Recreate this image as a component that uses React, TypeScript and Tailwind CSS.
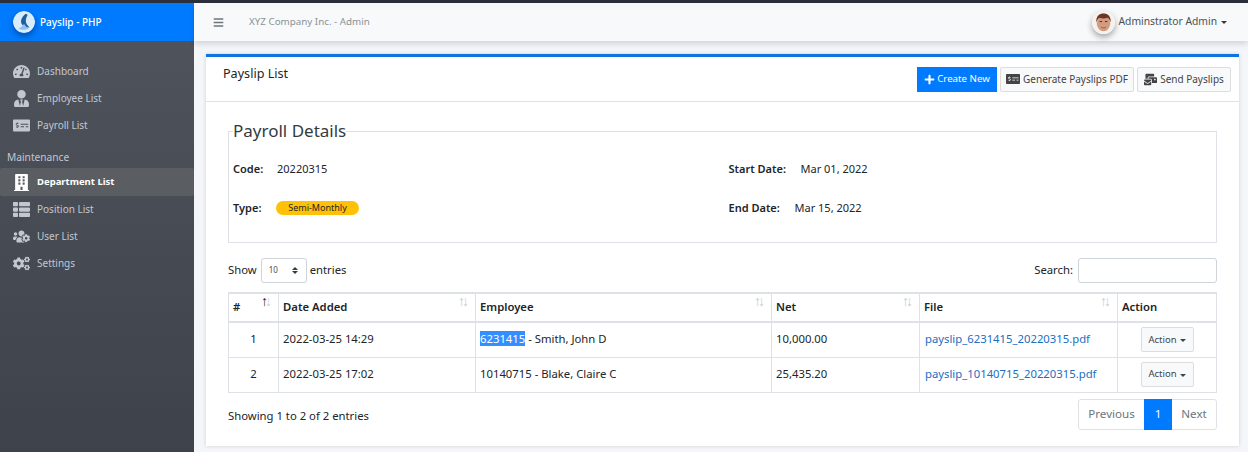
import { FaBars, FaBuilding, FaCogs, FaMailBulk, FaMoneyCheckAlt, FaPlus, FaTachometerAlt, FaThList, FaUserTie, FaUsersCog } from 'react-icons/fa';
import type { IconType } from 'react-icons';

const font = "font-['Noto_Sans',sans-serif]";

const mainNav: { label: string; icon: IconType }[] = [
  { label: 'Dashboard', icon: FaTachometerAlt },
  { label: 'Employee List', icon: FaUserTie },
  { label: 'Payroll List', icon: FaMoneyCheckAlt },
];

const maintenanceNav: { label: string; icon: IconType; active?: boolean }[] = [
  { label: 'Department List', icon: FaBuilding, active: true },
  { label: 'Position List', icon: FaThList },
  { label: 'User List', icon: FaUsersCog },
  { label: 'Settings', icon: FaCogs },
];

function NavItem({ label, icon: Icon, active }: { label: string; icon: IconType; active?: boolean }) {
  return (
    <div
      className={`flex items-center rounded-[2px] pl-[9px] ${
        active ? 'h-[28px] bg-[#5a5e62] text-[9.500px] font-bold text-white' : 'h-[27px] text-[10px] text-[#c2c7d0]'
      }`}
    >
      <span className="flex w-[24px] justify-center text-[17px]">
        <Icon />
      </span>
      <span className="ml-[4px]">{label}</span>
    </div>
  );
}

function Logo() {
  return (
    <svg viewBox="0 0 24 24" className="h-[22px] w-[22px] rounded-full shadow-[0_3px_6px_rgba(0,0,0,0.35)]">
      <circle cx="12" cy="12" r="12" fill="#d9ecfb" />
      <path d="M14 3c-3 2-6 6-5 10 1 3 5 5 9 5-2-2-4-4-4-7 0-3 1-5 2-7z" fill="#1f5f9e" />
      <path d="M6 19c3-1 5-3 6-5 1 2 3 4 5 5-3 2-8 2-11 0z" fill="#8fc1ea" />
    </svg>
  );
}

function Avatar() {
  return (
    <svg viewBox="0 0 24 24" className="h-[23px] w-[23px] rounded-full shadow-[0_3px_6px_rgba(0,0,0,0.35)]">
      <circle cx="12" cy="12" r="12" fill="#f4f1ee" />
      <ellipse cx="12" cy="13" rx="7" ry="8" fill="#d29b7e" />
      <path d="M4.5 12C4 5 8 2.5 12 2.500s8 2.500 7.500 9.500c-1-3-2-4.500-3.500-5-3 1-6 1-8 0-1.500.5-2.500 2-3.500 5z" fill="#6b3423" />
      <path d="M8 11h2.500M13.500 11H16" stroke="#4a2a1c" strokeWidth="1" />
      <path d="M9.500 17c1.500.8 3.500.8 5 0" stroke="#8a4f3a" strokeWidth="0.800" fill="none" />
    </svg>
  );
}

function Sort({ active }: { active?: boolean }) {
  return (
    <span className="absolute right-[6px] top-[-1px] flex text-[14px] leading-[16px]">
      <span className={active ? 'text-[#212529]' : 'text-[#c8cbce]'}>↑</span>
      <span className="ml-[-3px] text-[#c8cbce]">↓</span>
    </span>
  );
}

function ActionButton() {
  return (
    <div className="mx-auto flex h-[25px] w-[53px] items-center justify-center gap-[3px] rounded-[2px] border border-[#dddddd] bg-[#f8f9fa] text-[9.500px] text-[#444444]">
      Action
      <span className="mt-[1px] border-x-[3px] border-t-[3px] border-x-transparent border-t-[#444444]" />
    </div>
  );
}

const rows = [
  { n: 1, date: '2022-03-25 14:29', id: '6231415', name: ' - Smith, John D', net: '10,000.00', file: 'payslip_6231415_20220315.pdf', picked: true },
  { n: 2, date: '2022-03-25 17:02', id: '10140715', name: ' - Blake, Claire C', net: '25,435.20', file: 'payslip_10140715_20220315.pdf', picked: false },
];

export default function App() {
  return (
    <div className={`${font} flex h-[452px] w-[1248px] flex-col overflow-hidden bg-[#f4f6f9] text-[#212529]`}>
      <div className="h-[3px] shrink-0 bg-[#2c2f3c]" />
      <div className="flex min-h-0 flex-1">
        {/* Sidebar */}
        <aside className="w-[194px] shrink-0 bg-gradient-to-b from-[#50545d] to-[#3d424b]">
          <div className="flex h-[38px] items-center gap-[5px] bg-[#007bff] pl-[13px] text-[10px] font-medium text-white">
            <Logo />
            Payslip - PHP
          </div>
          <nav className="pt-[17px]">
            {mainNav.map(item => (
              <NavItem key={item.label} {...item} />
            ))}
            <div className="flex h-[29px] items-end pb-[3px] pl-[7px] text-[10.200px] text-[#c2c7d0]">Maintenance</div>
            {maintenanceNav.map(item => (
              <NavItem key={item.label} {...item} />
            ))}
          </nav>
        </aside>

        <div className="flex min-w-0 flex-1 flex-col">
          {/* Top bar */}
          <header className="z-10 flex h-[38px] shrink-0 items-center bg-[#f8f9fa] pl-[19px] pr-[21px] shadow-[0_3px_6px_rgba(0,0,0,0.14)]">
            <FaBars className="text-[11px] text-[#6c757d]" />
            <span className="ml-[25px] text-[9.800px] text-[#8b9298]">XYZ Company Inc. - Admin</span>
            <div className="ml-auto flex items-center gap-[4px] text-[10.300px] text-[#495057]">
              <Avatar />
              Adminstrator Admin
              <span className="border-x-[3px] border-t-[3px] border-x-transparent border-t-[#343a40]" />
            </div>
          </header>

          {/* Card */}
          <main className="ml-[12px] mr-[9px] mt-[13px] flex h-[392px] flex-col border-t-[3px] border-[#0f73e0] bg-white shadow-[0_0_4px_rgba(0,0,0,0.16)]">
            <div className="flex h-[45px] shrink-0 items-center border-b border-[#dfe1e4] pl-[17px] pr-[8px]">
              <h1 className="mb-[9px] text-[12.600px] font-normal text-[#212529]">Payslip List</h1>
              <div className="ml-auto flex gap-[3px] text-[10px]">
                <div className="flex h-[25px] w-[80px] items-center justify-center gap-[2px] bg-[#007bff] text-[9.700px] text-white">
                  <FaPlus className="text-[11px]" />
                  Create New
                </div>
                <div className="flex h-[25px] w-[134px] items-center justify-center gap-[3px] rounded-[2px] border border-[#dddddd] bg-[#f8f9fa] text-[#444444]">
                  <FaMoneyCheckAlt className="text-[14px]" />
                  Generate Payslips PDF
                </div>
                <div className="flex h-[25px] w-[94px] items-center justify-center gap-[3px] rounded-[2px] border border-[#dddddd] bg-[#f8f9fa] text-[#444444]">
                  <FaMailBulk className="text-[13px]" />
                  Send Payslips
                </div>
              </div>
            </div>

            <div className="px-[22px]">
              <fieldset className="mt-[17px] h-[124px] border border-[#dee2e6] px-[4px]">
                <legend className="text-[17px] leading-[24px] text-[#343a40]">Payroll Details</legend>
                <div className="grid grid-cols-2 pt-[6px] text-[11px] leading-[16px]">
                  <div className="flex h-[39px] items-center">
                    <b className="w-[44px] font-semibold">Code:</b>
                    <span>20220315</span>
                  </div>
                  <div className="ml-[6px] flex h-[39px] items-center">
                    <b className="w-[72px] font-semibold">Start Date:</b>
                    <span>Mar 01, 2022</span>
                  </div>
                  <div className="flex h-[39px] items-center">
                    <b className="w-[43px] font-semibold">Type:</b>
                    <span className="flex h-[14px] w-[83px] items-center justify-center rounded-full bg-[#ffc107] text-[9px]">
                      Semi-Monthly
                    </span>
                  </div>
                  <div className="ml-[6px] flex h-[39px] items-center">
                    <b className="w-[66px] font-semibold">End Date:</b>
                    <span>Mar 15, 2022</span>
                  </div>
                </div>
              </fieldset>

              <div className="mt-[14px] flex h-[26px] items-center text-[11.300px]">
                Show
                <div className="ml-[4px] mr-[3px] flex h-[25px] w-[46px] items-center justify-between rounded-[3px] border border-[#ced4da] pl-[7px] pr-[8px] text-[8px] text-[#495057]">
                  10
                  <span className="flex flex-col gap-[1px]">
                    <span className="border-x-[3px] border-b-[3px] border-x-transparent border-b-[#343a40]" />
                    <span className="border-x-[3px] border-t-[3px] border-x-transparent border-t-[#343a40]" />
                  </span>
                </div>
                entries
                <span className="ml-auto mr-[5px]">Search:</span>
                <div className="h-[25px] w-[139px] rounded-[3px] border border-[#ced4da]" />
              </div>

              <table className="mt-[9px] w-[988px] table-fixed border-collapse text-[11.300px]">
                <colgroup>
                  <col className="w-[50px]" />
                  <col className="w-[197px]" />
                  <col className="w-[296px]" />
                  <col className="w-[148px]" />
                  <col className="w-[198px]" />
                  <col className="w-[99px]" />
                </colgroup>
                <thead>
                  <tr className="h-[29px] text-left">
                    {['#', 'Date Added', 'Employee', 'Net', 'File', 'Action'].map((h, i) => (
                      <th key={h} className="relative border border-b-2 border-t-2 border-[#dee2e6] pl-[4px] font-semibold">
                        {h}
                        {i < 5 && <Sort active={i === 0} />}
                      </th>
                    ))}
                  </tr>
                </thead>
                <tbody>
                  {rows.map(r => (
                    <tr key={r.n} className="h-[35px]">
                      <td className="border border-[#dee2e6] text-center">{r.n}</td>
                      <td className="border border-[#dee2e6] pl-[4px]">{r.date}</td>
                      <td className="border border-[#dee2e6] pl-[4px]">
                        <span className={r.picked ? 'bg-[#338fff] text-white' : ''}>{r.id}</span>
                        {r.name}
                      </td>
                      <td className="border border-[#dee2e6] pl-[4px]">{r.net}</td>
                      <td className="border border-[#dee2e6] pl-[5px] text-[#1b6ec2]">{r.file}</td>
                      <td className="border border-[#dee2e6]">
                        <ActionButton />
                      </td>
                    </tr>
                  ))}
                </tbody>
              </table>

              <div className="mt-[6px] flex justify-between text-[11.300px]">
                <span className="pt-[9px]">Showing 1 to 2 of 2 entries</span>
                <div className="flex h-[31px] items-center rounded-[3px] border border-[#dee2e6] text-[11.600px] text-[#6c757d]">
                  <span className="flex h-full w-[65px] items-center justify-center">Previous</span>
                  <span className="flex h-[31px] w-[28px] items-center justify-center bg-[#007bff] text-white">1</span>
                  <span className="flex h-full w-[44px] items-center justify-center">Next</span>
                </div>
              </div>
            </div>
          </main>
        </div>
      </div>
    </div>
  );
}
